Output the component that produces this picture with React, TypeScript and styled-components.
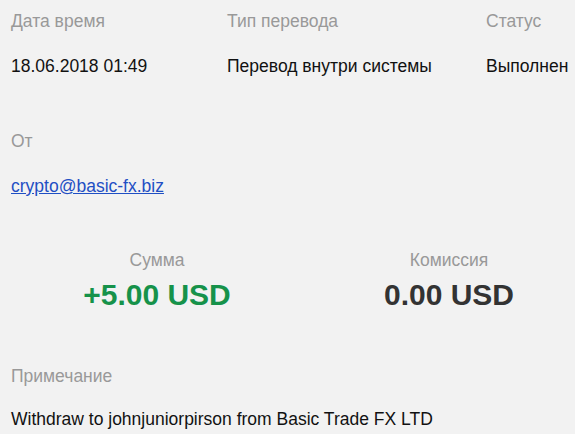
import React from 'react';
import styled, { createGlobalStyle } from 'styled-components';

const GlobalStyle = createGlobalStyle`
    html, body {
        margin: 0;
        padding: 0;
        background: #f2f2f2;
        font-family: "Liberation Sans", Arial, sans-serif;
    }
`;

export default function App() {
    return (
        <Page>
            <GlobalStyle />
            <InfoGrid>
                <Field>
                    <Label>Дата время</Label>
                    <Value>18.06.2018 01:49</Value>
                </Field>
                <Field>
                    <Label>Тип перевода</Label>
                    <Value>Перевод внутри системы</Value>
                </Field>
                <Field>
                    <Label>Статус</Label>
                    <Value>Выполнен</Value>
                </Field>
            </InfoGrid>

            <Field>
                <Label>От</Label>
                <Value><EmailLink href="#">crypto@basic-fx.biz</EmailLink></Value>
            </Field>

            <AmountGrid>
                <AmountBox>
                    <Label>Сумма</Label>
                    <Amount positive>+5.00 USD</Amount>
                </AmountBox>
                <AmountBox>
                    <Label>Комиссия</Label>
                    <Amount>0.00 USD</Amount>
                </AmountBox>
            </AmountGrid>

            <NoteField>
                <Label>Примечание</Label>
                <Value>Withdraw to johnjuniorpirson from Basic Trade FX LTD</Value>
            </NoteField>
        </Page>
    );
}

const Page = styled.div`
    display: flex;
    flex-direction: column;
    gap: 55px;
    padding: 11px 11px 0;
    width: 575px;
    height: 434px;
    box-sizing: border-box;
    overflow: hidden;
    white-space: nowrap;
`;

const InfoGrid = styled.div`
    display: grid;
    grid-template-columns: 216px 259px auto;
`;

const Field = styled.div`
    display: flex;
    flex-direction: column;
    gap: 25px;
`;

const NoteField = styled(Field)`
    gap: 23px;
    margin-top: -1px;
`;

const Label = styled.div`
    font-size: 17.5px;
    line-height: 20px;
    color: #999;
`;

const Value = styled.div`
    font-size: 17.5px;
    line-height: 20px;
    color: #111;
`;

const EmailLink = styled.a`
    color: #1f4fc4;
    text-decoration: underline;
`;

const AmountGrid = styled.div`
    display: grid;
    grid-template-columns: 292px 292px;
    margin-top: -1px;
`;

const AmountBox = styled.div`
    display: flex;
    flex-direction: column;
    align-items: center;
    gap: 8px;
`;

const Amount = styled.div<{ positive?: boolean }>`
    font-size: 30px;
    line-height: 34px;
    font-weight: 700;
    color: ${p => (p.positive ? '#16924a' : '#333')};
`;
